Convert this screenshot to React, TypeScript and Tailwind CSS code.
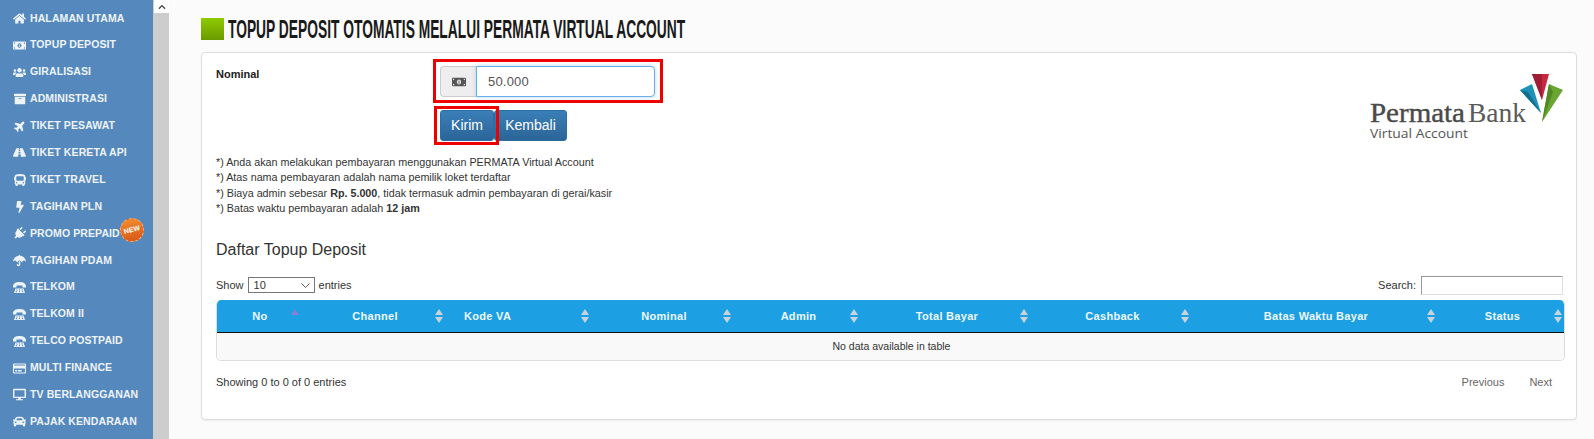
import {
  FaHome, FaMoneyBillAlt, FaUsers, FaArchive, FaPlane, FaRoad, FaBus, FaBolt, FaPlug,
  FaUmbrella, FaRegCreditCard, FaDesktop, FaCar, FaChevronUp,
} from "react-icons/fa";

// old style desk phone, the icon packages only have a taller one
function DeskPhone() {
  return (
    <svg width="13" height="11" viewBox="0 0 13 11" fill="currentColor">
      <path d="M0 4.5 C0 1.2 3 0 6.5 0 S13 1.2 13 4.5 V5.5 H9.5 V3.5 H3.5 V5.5 H0 Z" />
      <path d="M2.5 6.5 H10.5 L12 11 H1 Z" />
      <g fill="#5589bd">
        <rect x="3.2" y="7.5" width="1.2" height="1" />
        <rect x="5.9" y="7.5" width="1.2" height="1" />
        <rect x="8.6" y="7.5" width="1.2" height="1" />
        <rect x="2.8" y="9.2" width="1.2" height="1" />
        <rect x="5.9" y="9.2" width="1.2" height="1" />
        <rect x="9" y="9.2" width="1.2" height="1" />
      </g>
    </svg>
  );
}

const menu = [
  { label: "Halaman Utama", icon: <FaHome size={13} /> },
  { label: "Topup Deposit", icon: <FaMoneyBillAlt size={13} /> },
  { label: "Giralisasi", icon: <FaUsers size={15} /> },
  { label: "Administrasi", icon: <FaArchive size={12} /> },
  { label: "Tiket Pesawat", icon: <FaPlane size={12} className="-rotate-45" /> },
  { label: "Tiket Kereta Api", icon: <FaRoad size={13} /> },
  { label: "Tiket Travel", icon: <FaBus size={12} /> },
  { label: "Tagihan PLN", icon: <FaBolt size={12} /> },
  { label: "Promo Prepaid", icon: <FaPlug size={13} className="rotate-45" />, isNew: true },
  { label: "Tagihan PDAM", icon: <FaUmbrella size={13} /> },
  { label: "Telkom", icon: <DeskPhone /> },
  { label: "Telkom II", icon: <DeskPhone /> },
  { label: "Telco Postpaid", icon: <DeskPhone /> },
  { label: "Multi Finance", icon: <FaRegCreditCard size={13} /> },
  { label: "TV Berlangganan", icon: <FaDesktop size={13} /> },
  { label: "Pajak Kendaraan", icon: <FaCar size={13} /> },
];

const columns = [
  { label: "No", width: 86, active: true },
  { label: "Channel", width: 144 },
  { label: "Kode VA", width: 146, left: true },
  { label: "Nominal", width: 142 },
  { label: "Admin", width: 127 },
  { label: "Total Bayar", width: 170 },
  { label: "Cashback", width: 161 },
  { label: "Batas Waktu Bayar", width: 246 },
  { label: "Status", width: 127 },
];

function SortIcon({ active }: { active?: boolean }) {
  return (
    <svg width="8" height="14" viewBox="0 0 8 14" className="absolute right-[4px] top-[9px]">
      <path d="M4 0 L8 6 L0 6 Z" fill={active ? "#8a7fd6" : "#c9d3da"} />
      {!active && <path d="M0 8 L8 8 L4 14 Z" fill="#c9d3da" />}
    </svg>
  );
}

function Sidebar() {
  return (
    <nav className="w-[153px] shrink-0 bg-[#5589bd] pt-[5px]">
      {menu.map((item) => (
        <div key={item.label} className="relative flex h-[26.9px] items-center gap-[4px] pl-[13px]">
          <span className="flex w-[13px] justify-center text-[#eef3f8]">{item.icon}</span>
          <span className="whitespace-nowrap text-[10.5px] font-bold uppercase tracking-[0.1px] text-[#eef3f8]">
            {item.label}
          </span>
          {item.isNew && (
            <span className="absolute left-[120px] top-[-2px] flex h-[24px] w-[24px] rotate-[-15deg] items-center justify-center rounded-full border border-dashed border-[#f6b27d] bg-gradient-to-b from-[#f08a2e] to-[#d9591a] text-[7px] font-bold text-white">
              NEW
            </span>
          )}
        </div>
      ))}
    </nav>
  );
}

function PermataLogo() {
  return (
    <svg width="200" height="72" viewBox="0 0 200 72" className="mt-[6px] shrink-0">
      <path d="M167 2 L184 2 L177 28 Z" fill="#c8283f" />
      <path d="M167 2 L177 2 L177 28 Z" fill="#a01d33" />
      <path d="M155 18 L167 12 L176 41 Z" fill="#1d92b8" />
      <path d="M155 18 L163 20 L176 41 Z" fill="#136f90" />
      <path d="M184 12 L198 18 L177 50 Z" fill="#6aa532" />
      <path d="M184 12 L188 20 L177 50 Z" fill="#4f8a22" />
      <text x="5" y="50" textLength="95" lengthAdjust="spacingAndGlyphs" fontSize="27" stroke="#4a4a4a" strokeWidth="0.4" fontFamily="Liberation Serif, serif" fill="#4a4a4a">
        Permata
      </text>
      <text x="103" y="50" textLength="58" lengthAdjust="spacingAndGlyphs" fontSize="27" fontFamily="Liberation Serif, serif" fill="#5a5a5a">
        Bank
      </text>
      <text x="5" y="66" textLength="98" lengthAdjust="spacingAndGlyphs" fontSize="13" fontFamily="Open Sans, sans-serif" fill="#555555">
        Virtual Account
      </text>
    </svg>
  );
}

function DepositForm() {
  return (
    <div className="flex justify-between">
      <div className="flex">
        <label className="w-[224px] text-[11px] font-bold text-[#222222]">Nominal</label>
        <div className="relative">
          {/* red annotation frames from the tutorial */}
          <div className="absolute left-[-7px] top-[-7px] h-[44px] w-[230px] border-[3px] border-[#ee0000]" />
          <div className="absolute left-[-6px] top-[40px] h-[39px] w-[65px] border-[3px] border-[#ee0000]" />
          <div className="flex h-[31px] w-[215px]">
            <div className="flex w-[36px] items-center justify-center rounded-l-[4px] border border-r-0 border-[#cccccc] bg-[#eeeeee] text-[#555555]">
              <FaMoneyBillAlt size={14} />
            </div>
            <div className="flex flex-1 items-center rounded-r-[4px] border border-[#66afe9] bg-white pl-[11px] text-[13px] tracking-[0.2px] text-[#555555] shadow-[0_0_4px_rgba(102,175,233,0.5)]">
              50.000
            </div>
          </div>
          <div className="mt-[13px] flex">
            <button className="h-[31px] w-[54px] rounded-[3px] border border-[#2e6da4] bg-gradient-to-b from-[#3a7fb8] to-[#2b6598] text-[14px] text-white">
              Kirim
            </button>
            <button className="h-[31px] w-[73px] rounded-[3px] border border-[#2e6da4] bg-gradient-to-b from-[#3a7fb8] to-[#2b6598] text-[14px] text-white">
              Kembali
            </button>
          </div>
        </div>
      </div>
      <PermataLogo />
    </div>
  );
}

function DepositTable() {
  return (
    <div className="mt-[5px] overflow-hidden rounded-[5px] border border-[#dddddd] border-t-0">
      <table className="w-[1349px] table-fixed border-collapse">
        <colgroup>
          {columns.map((c) => (
            <col key={c.label} style={{ width: c.width }} />
          ))}
        </colgroup>
        <thead>
          <tr className="h-[33px] border-b border-[#111111] bg-[#1c9fe3] text-[11px] font-bold tracking-[0.3px] text-[#eef7fc]">
            {columns.map((c) => (
              <th key={c.label} className={`relative font-bold ${c.left ? "pl-[17px] text-left" : "text-center"}`}>
                {c.label}
                <SortIcon active={c.active} />
              </th>
            ))}
          </tr>
        </thead>
        <tbody>
          <tr className="h-[27px] bg-[#f9f9f9]">
            <td colSpan={9} className="text-center text-[10.5px] text-[#333333]">
              No data available in table
            </td>
          </tr>
        </tbody>
      </table>
    </div>
  );
}

export default function App() {
  return (
    <div className="flex h-[439px] w-[1594px] overflow-hidden bg-[#fbfbfb] font-['Liberation_Sans',Arial,sans-serif] text-[#333333]">
      <Sidebar />
      <div className="w-[16px] shrink-0 bg-[#cdcdcd]">
        <div className="ml-[1px] flex h-[13px] items-center justify-center bg-white text-[#444444]">
          <FaChevronUp size={8} />
        </div>
      </div>
      <main className="min-w-0 flex-1 pl-[32px] pr-[17px] pt-[18px]">
        <div className="flex h-[22px] items-center gap-[4px]">
          <span className="h-[22px] w-[23px] shrink-0 bg-gradient-to-b from-[#8fcb00] to-[#6a9a00]" />
          <h1 className="origin-left scale-x-[0.552] whitespace-nowrap text-[25px] font-bold uppercase leading-none text-[#1a1a1a]">
            Topup Deposit Otomatis Melalui Permata Virtual Account
          </h1>
        </div>
        <section className="mt-[12px] h-[368px] rounded-[4px] border border-[#dddddd] bg-white pl-[14px] pr-[11px] pt-[13px] shadow-[0_1px_1px_rgba(0,0,0,0.05)]">
          <DepositForm />
          <div className="mt-[11px] text-[10.75px] leading-[15.4px] text-[#333333]">
            <p>*) Anda akan melakukan pembayaran menggunakan PERMATA Virtual Account</p>
            <p>*) Atas nama pembayaran adalah nama pemilik loket terdaftar</p>
            <p>
              *) Biaya admin sebesar <b>Rp. 5.000</b>, tidak termasuk admin pembayaran di gerai/kasir
            </p>
            <p>
              *) Batas waktu pembayaran adalah <b>12 jam</b>
            </p>
          </div>
          <h3 className="mt-[23px] text-[16px] leading-[20px] text-[#333333]">Daftar Topup Deposit</h3>
          <div className="mt-[16px] flex h-[19px] items-center justify-between text-[11px]">
            <div className="flex items-center gap-[4px]">
              Show
              <div className="flex h-[16px] w-[67px] items-center justify-between border border-[#767676] bg-white pl-[5px] pr-[4px]">
                10
                <svg width="9" height="5" viewBox="0 0 9 5" fill="none" stroke="#555555">
                  <path d="M0.5 0.5 L4.5 4.5 L8.5 0.5" />
                </svg>
              </div>
              entries
            </div>
            <div className="mr-[2px] flex items-center gap-[5px]">
              Search:
              <div className="h-[19px] w-[142px] border border-[#dddddd] border-l-[#999999] border-t-[#999999] bg-white" />
            </div>
          </div>
          <DepositTable />
          <div className="mt-[13px] flex items-center justify-between text-[11px]">
            <span>Showing 0 to 0 of 0 entries</span>
            <div className="flex gap-[25px] pr-[13px] text-[#666666]">
              <span>Previous</span>
              <span>Next</span>
            </div>
          </div>
        </section>
      </main>
    </div>
  );
}
